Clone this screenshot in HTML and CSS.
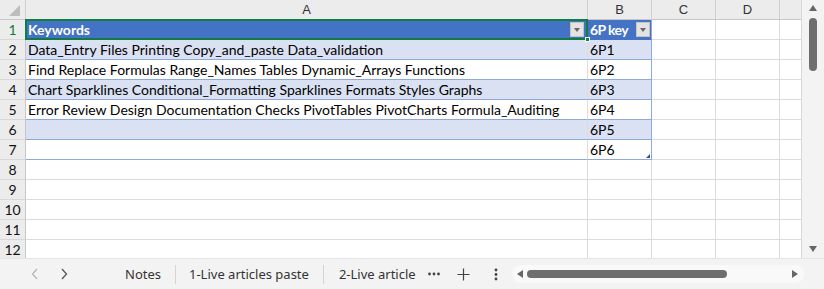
FILE: index.html
```html
<!DOCTYPE html>
<html lang="en">
<head>
    <meta charset="UTF-8">
    <title>Keywords sheet</title>
    <link rel="stylesheet" href="styles.css">
</head>
<body>
    <div class="workbook">
        <div class="sheet-area">
            <div class="grid">
                <!-- column headers -->
                <div class="corner"><span class="corner-tri"></span></div>
                <div class="hd">A</div>
                <div class="hd">B</div>
                <div class="hd">C</div>
                <div class="hd">D</div>
                <div class="hd"></div>

                <!-- row 1: table header -->
                <div class="rh active">1</div>
                <div class="c th selected">Keywords<span class="filter"></span><span class="handle"></span></div>
                <div class="c th last key">6P key<span class="filter"></span></div>
                <div class="c"></div><div class="c"></div><div class="c"></div>

                <div class="rh">2</div>
                <div class="c band">Data_Entry Files Printing Copy_and_paste Data_validation</div>
                <div class="c band last">6P1</div>
                <div class="c"></div><div class="c"></div><div class="c"></div>

                <div class="rh">3</div>
                <div class="c plain">Find Replace Formulas Range_Names Tables Dynamic_Arrays Functions</div>
                <div class="c plain last">6P2</div>
                <div class="c"></div><div class="c"></div><div class="c"></div>

                <div class="rh">4</div>
                <div class="c band">Chart Sparklines Conditional_Formatting Sparklines Formats Styles Graphs</div>
                <div class="c band last">6P3</div>
                <div class="c"></div><div class="c"></div><div class="c"></div>

                <div class="rh">5</div>
                <div class="c plain">Error Review Design Documentation Checks PivotTables PivotCharts Formula_Auditing</div>
                <div class="c plain last">6P4</div>
                <div class="c"></div><div class="c"></div><div class="c"></div>

                <div class="rh">6</div>
                <div class="c band"></div>
                <div class="c band last">6P5</div>
                <div class="c"></div><div class="c"></div><div class="c"></div>

                <div class="rh">7</div>
                <div class="c plain"></div>
                <div class="c plain last">6P6<span class="resize"></span></div>
                <div class="c"></div><div class="c"></div><div class="c"></div>

                <div class="rh">8</div>
                <div class="c"></div><div class="c"></div><div class="c"></div><div class="c"></div><div class="c"></div>
                <div class="rh">9</div>
                <div class="c"></div><div class="c"></div><div class="c"></div><div class="c"></div><div class="c"></div>
                <div class="rh">10</div>
                <div class="c"></div><div class="c"></div><div class="c"></div><div class="c"></div><div class="c"></div>
                <div class="rh">11</div>
                <div class="c"></div><div class="c"></div><div class="c"></div><div class="c"></div><div class="c"></div>
                <div class="rh">12</div>
                <div class="c"></div><div class="c"></div><div class="c"></div><div class="c"></div><div class="c"></div>
            </div>

            <div class="vscroll">
                <span class="arrow-up"></span>
                <span class="vthumb"></span>
                <span class="arrow-down"></span>
            </div>
        </div>

        <div class="tabbar">
            <div class="nav">
                <svg class="chev off" width="8" height="12" viewBox="0 0 8 12"><path d="M6 1 L1.5 6 L6 11" fill="none" stroke="currentColor" stroke-width="1.3"/></svg>
                <svg class="chev" width="8" height="12" viewBox="0 0 8 12"><path d="M2 1 L6.5 6 L2 11" fill="none" stroke="currentColor" stroke-width="1.3"/></svg>
            </div>
            <div class="tabs">
                <span class="tab">Notes</span>
                <span class="sep"></span>
                <span class="tab">1-Live articles paste</span>
                <span class="sep"></span>
                <span class="tab wide">2-Live article</span>
                <svg class="more" width="12" height="4" viewBox="0 0 12 4"><circle cx="1.5" cy="2" r="1.4" fill="#444"/><circle cx="6" cy="2" r="1.4" fill="#444"/><circle cx="10.5" cy="2" r="1.4" fill="#444"/></svg>
                <svg class="plus" width="13" height="13" viewBox="0 0 13 13"><path d="M6.5 0.5 V12.5 M0.5 6.5 H12.5" stroke="#444" stroke-width="1.2"/></svg>
                <svg class="kebab" width="4" height="13" viewBox="0 0 4 13"><circle cx="2" cy="2" r="1.4" fill="#444"/><circle cx="2" cy="6.5" r="1.4" fill="#444"/><circle cx="2" cy="11" r="1.4" fill="#444"/></svg>
            </div>
            <div class="hscroll">
                <span class="arrow-left"></span>
                <span class="hthumb"></span>
                <span class="arrow-right"></span>
            </div>
        </div>
    </div>
</body>
</html>
```

FILE: styles.css
```css
/* General Styles */
* {
    margin: 0;
    padding: 0;
    box-sizing: border-box;
}

body {
    font-family: Lato, "Liberation Sans", Arial, sans-serif;
    background-color: #f3f3f3;
    width: 824px;
    height: 289px;
    overflow: hidden;
}

.workbook {
    display: flex;
    flex-direction: column;
    height: 289px;
}

.sheet-area {
    display: flex;
    height: 258px;
    background-color: #fff;
}

/* Grid Styles */
.grid {
    display: grid;
    grid-template-columns: 26px 562px 64px 64px 64px 22px;
    grid-auto-rows: 20px;
    width: 802px;
    height: 258px;
    overflow: hidden;
    border-right: 1px solid #d8d8d8;
}

.corner,
.hd {
    background-color: #ececec;
    border-right: 1px solid #d0d0d0;
    border-bottom: 1px solid #c6c6c6;
}

.corner {
    position: relative;
}

.corner-tri {
    position: absolute;
    right: 5px;
    bottom: 3px;
    width: 0;
    height: 0;
    border-left: 11px solid transparent;
    border-bottom: 11px solid #bdbdbd;
}

.hd {
    font-family: "Liberation Sans", Arial, sans-serif;
    font-size: 13px;
    color: #333;
    text-align: center;
    line-height: 19px;
}

.rh {
    background-color: #ececec;
    border-right: 1px solid #c6c6c6;
    border-bottom: 1px solid #d8d8d8;
    font-size: 14px;
    color: #111;
    text-align: center;
    line-height: 20px;
}

.rh.active {
    color: #107c41;
}

.c {
    position: relative;
    border-right: 1px solid #dcdcdc;
    border-bottom: 1px solid #dcdcdc;
    font-size: 14px;
    color: #000;
    padding-left: 2px;
    line-height: 19px;
    white-space: nowrap;
}

/* Table Styles */
.th {
    background-color: #4472c4;
    color: #fff;
    font-weight: bold;
    border-bottom-color: #4472c4;
}

.key {
    letter-spacing: -0.6px;
}

.band {
    background-color: #d9e1f2;
    border-bottom-color: #8ea9db;
}

.plain {
    background-color: #fff;
    border-bottom-color: #8ea9db;
}

.last {
    border-right-color: #8ea9db;
}

.filter {
    position: absolute;
    right: 1px;
    top: 2px;
    width: 14px;
    height: 15px;
    background-color: #e3e3e3;
    border: 1px solid #c4c4c4;
}

.filter::after {
    content: "";
    position: absolute;
    left: 3px;
    top: 5px;
    border-left: 3px solid transparent;
    border-right: 3px solid transparent;
    border-top: 4px solid #666;
}

.selected::before {
    content: "";
    position: absolute;
    left: -1px;
    top: -1px;
    right: -1px;
    bottom: -1px;
    border: 2px solid #107c41;
}

.selected .filter {
    right: 3px;
}

.handle {
    position: absolute;
    right: -3px;
    bottom: -3px;
    width: 5px;
    height: 5px;
    background-color: #107c41;
    border: 1px solid #fff;
    z-index: 2;
}

.resize {
    position: absolute;
    right: 1px;
    bottom: 1px;
    width: 0;
    height: 0;
    border-left: 4px solid transparent;
    border-bottom: 4px solid #2f5597;
}

/* Vertical scrollbar */
.vscroll {
    position: relative;
    flex: 1;
    background-color: #f3f3f3;
}

.arrow-up,
.arrow-down {
    position: absolute;
    left: 7px;
    border-left: 4px solid transparent;
    border-right: 4px solid transparent;
}

.arrow-up {
    top: 5px;
    border-bottom: 6px solid #666;
}

.arrow-down {
    bottom: 6px;
    border-top: 6px solid #666;
}

.vthumb {
    position: absolute;
    left: 7px;
    top: 18px;
    width: 8px;
    height: 53px;
    border-radius: 4px;
    background-color: #6e6e6e;
}

/* Sheet tab bar */
.tabbar {
    display: flex;
    align-items: center;
    height: 31px;
    border-top: 1px solid #e4e4e4;
    font-family: "Noto Sans", "Open Sans", sans-serif;
    font-size: 13px;
    color: #333;
}

.nav {
    display: flex;
    gap: 21px;
    padding-left: 31px;
    width: 112px;
}

.chev {
    color: #555;
}

.chev.off {
    color: #b8b8b8;
}

.tabs {
    display: flex;
    align-items: center;
    width: 400px;
}

.tab {
    padding: 0 13px;
}

.tab.wide {
    padding-left: 15px;
}

.sep {
    width: 1px;
    height: 19px;
    margin-left: 1px;
    background-color: #d4d4d4;
}

.more {
    margin-left: -1px;
}

.plus {
    margin-left: 17px;
}

.kebab {
    margin-left: 24px;
}

/* Horizontal scrollbar */
.hscroll {
    position: relative;
    width: 292px;
    height: 18px;
    border-radius: 9px;
    background-color: #f9f9f9;
}

.arrow-left,
.arrow-right {
    position: absolute;
    top: 5px;
    border-top: 4px solid transparent;
    border-bottom: 4px solid transparent;
}

.arrow-left {
    left: 5px;
    border-right: 6px solid #666;
}

.arrow-right {
    right: 6px;
    border-left: 6px solid #666;
}

.hthumb {
    position: absolute;
    left: 15px;
    top: 5px;
    width: 200px;
    height: 8px;
    border-radius: 4px;
    background-color: #6e6e6e;
}
```
